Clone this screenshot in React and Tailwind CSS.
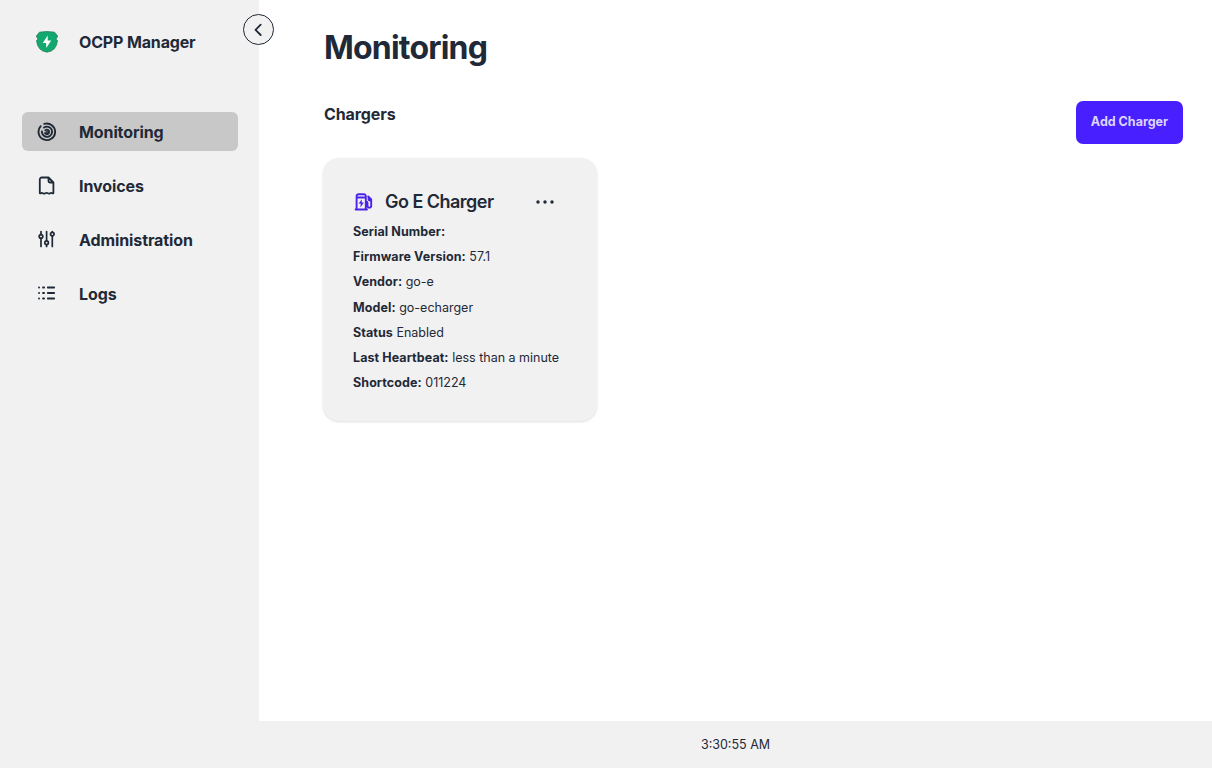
const stroke = {
  fill: 'none',
  stroke: 'currentColor',
  strokeLinecap: 'round',
  strokeLinejoin: 'round',
};

function Logo() {
  return (
    <svg viewBox="0 0 22 22" className="h-[22px] w-[22px]">
      <path
        d="M3.400 1.200Q11 -.2 18.600 1.200L21.600 5Q21.800 6.600 20.300 7.200V8.600L21.500 9.600Q20.500 20 11 21.200Q1.500 20 .5 9.600L1.700 8.600V7.200Q.2 6.600 .4 5Z"
        fill="#12a970"
        stroke="#267653"
        strokeWidth=".7"
      />
      <path d="M11.700 4.600L6.800 11.900H10.200V17L15.200 9.600H11.700Z" fill="#fff" />
    </svg>
  );
}

function RadarIcon() {
  return (
    <svg viewBox="0 0 20 20" className="h-5 w-5" {...stroke} strokeWidth="1.900">
      <path d="M7.300 1.900A8.300 8.300 0 1 1 3.700 4.200" />
      <path d="M7 5.600A5.100 5.100 0 1 1 4.900 9.500" />
      <path d="M8.300 8.300A2.200 2.200 0 1 1 8 11" />
      <circle cx="10" cy="10" r=".4" fill="currentColor" />
    </svg>
  );
}

function InvoiceIcon() {
  return (
    <svg viewBox="0 0 20 20" className="h-5 w-5" {...stroke} strokeWidth="1.800">
      <path d="M11.500 1.500H4.700A1.900 1.900 0 0 0 2.800 3.400V16.700Q2.800 17.700 3.900 17.300Q5 16.500 6.200 17.400Q7.200 18 8.300 17.300Q9.600 16.500 10.900 17.300Q12 18 13.100 17.300Q14.200 16.600 15.300 17.300Q16.400 17.700 16.400 16.700V6.500L11.500 1.500V4.700A1.800 1.800 0 0 0 13.300 6.500H16.400" />
    </svg>
  );
}

function SlidersIcon() {
  return (
    <svg viewBox="0 0 20 20" className="h-5 w-5" {...stroke} strokeWidth="1.700">
      <path d="M4 1.500V4.400M4 8.400V16.500M9.600 1.500V10.700M9.600 14.700V16.500M15.300 1.500V2.100M15.300 6.100V16.500" />
      <circle cx="4" cy="6.400" r="1.800" />
      <circle cx="9.600" cy="12.700" r="1.800" />
      <circle cx="15.300" cy="4.100" r="1.800" />
    </svg>
  );
}

function ListIcon() {
  return (
    <svg viewBox="0 0 20 20" className="h-5 w-5" {...stroke} strokeWidth="1.800">
      <path d="M2 3.500H2.100M6 3.500H7.100M10.800 3.500H17.200M2 9H2.100M6 9H7.100M10.800 9H17.200M2 14.500H2.100M6 14.500H7.100M10.800 14.500H17.200" />
    </svg>
  );
}

function StationIcon() {
  return (
    <svg viewBox="0 0 20 20" className="h-5 w-5 text-[#4a22ea]" {...stroke} strokeWidth="1.900">
      <path d="M2.600 17.500H14M3.600 17.300V4.200A2 2 0 0 1 5.600 2.200H10.800A2 2 0 0 1 12.800 4.200V17.300M3.800 5.500H12.600M13 9.800H13.500A1 1 0 0 1 14.500 10.800V13.800A1.700 1.700 0 0 0 18.200 13.800V7.500L15.200 4.500M15.600 5.300V7.800L18 9" />
      <path d="M8.900 7.200L5.600 11.600H7.700L7.400 15.400L10.900 10.600H8.700Z" fill="currentColor" stroke="none" />
    </svg>
  );
}

const nav = [
  { label: 'Monitoring', Icon: RadarIcon, active: true },
  { label: 'Invoices', Icon: InvoiceIcon },
  { label: 'Administration', Icon: SlidersIcon },
  { label: 'Logs', Icon: ListIcon },
];

const details = [
  ['Serial Number:', ''],
  ['Firmware Version:', '57.1'],
  ['Vendor:', 'go-e'],
  ['Model:', 'go-echarger'],
  ['Status', 'Enabled'],
  ['Last Heartbeat:', 'less than a minute'],
  ['Shortcode:', '011224'],
];

export default function App() {
  return (
    <div className="flex h-screen w-full overflow-hidden bg-[#f1f1f1] font-['Inter',sans-serif] text-[#1f2937]">
      <aside className="relative w-[259px] shrink-0 px-[22px]">
        <div className="flex h-[84px] items-center pl-[14px]">
          <div className="-mt-[1px]">
            <Logo />
          </div>
          <span className="ml-[21px] text-base font-bold tracking-[-0.150px]">OCPP Manager</span>
        </div>
        <button
          aria-label="Collapse sidebar"
          className="absolute top-[14px] left-[243px] flex h-[31px] w-[31px] items-center justify-center rounded-full border border-[#1f2937] bg-[#f1f1f1]"
        >
          <svg viewBox="0 0 16 16" className="h-4 w-4" {...stroke} strokeWidth="1.800">
            <path d="M9.700 2.600L4.500 7.800L9.700 13" />
          </svg>
        </button>
        <nav className="mt-7 flex w-[216px] flex-col gap-[15px]">
          {nav.map(({ label, Icon, active }) => (
            <a
              key={label}
              className={`flex h-[39px] items-center rounded-md pl-[15px] ${active ? 'bg-[#c8c8c8]' : ''}`}
            >
              <Icon />
              <span className="ml-[22px] text-base font-bold tracking-[-0.100px]">{label}</span>
            </a>
          ))}
        </nav>
      </aside>
      <div className="flex min-w-0 flex-1 flex-col">
        <main className="h-[721px] bg-white pt-[27px] pr-[29px] pl-[65px]">
          <h1 className="text-[32px] leading-[42px] font-bold tracking-[-0.800px]">Monitoring</h1>
          <div className="mt-8 flex items-start justify-between">
            <h2 className="pt-[1px] text-base font-bold tracking-[-0.100px]">Chargers</h2>
            <button className="h-[43px] w-[107px] rounded-[7px] bg-[#4820ff] pb-[1px] text-[12.500px] font-bold text-[#dcd5fb]">
              Add Charger
            </button>
          </div>
          <section className="mt-[14px] -ml-[1px] h-[263px] w-[274px] rounded-2xl bg-[#f1f1f1] px-[30px] pt-[29px] shadow-sm">
            <div className="flex h-[29px] items-center">
              <StationIcon />
              <h3 className="ml-3 text-lg font-semibold tracking-[-0.520px]">Go E Charger</h3>
              <svg viewBox="0 0 18 4" className="ml-auto mr-[13px] h-1 w-[18px]" fill="currentColor">
                <circle cx="2" cy="2" r="1.700" />
                <circle cx="9" cy="2" r="1.700" />
                <circle cx="16" cy="2" r="1.700" />
              </svg>
            </div>
            <div className="mt-[3px] text-[12.500px] leading-[25.200px]">
              {details.map(([label, value]) => (
                <p key={label}>
                  <span className="font-bold tracking-[0.080px]">{label}</span> {value}
                </p>
              ))}
            </div>
          </section>
        </main>
        <footer className="flex flex-1 items-center justify-center pt-[2px] text-[12.500px]">3:30:55 AM</footer>
      </div>
    </div>
  );
}
